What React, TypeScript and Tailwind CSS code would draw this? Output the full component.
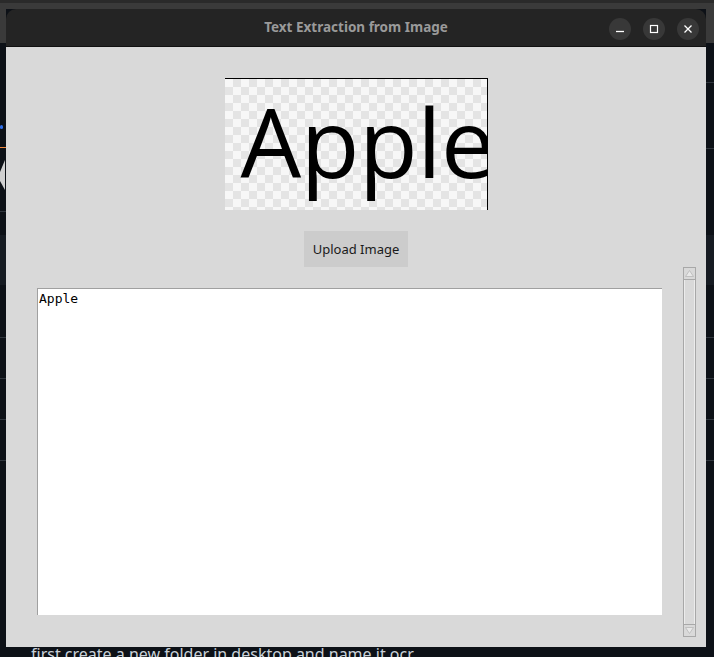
function Rule({ gap }: { gap: string }) {
  return <div className={`${gap} h-px w-full bg-[#30363d]`} />
}

function ScrollArrow({ down = false }: { down?: boolean }) {
  return (
    <div className={`flex h-[12px] items-center justify-center border-[#a8a8a8] ${down ? "border-t" : "border-b"}`}>
      <svg width="9" height="7" viewBox="0 0 9 7">
        <path d={down ? "M4.5 6.5L8.5 0.5H0.5Z" : "M4.5 0.5L8.5 6.5H0.5Z"} fill="#e8e8e8" stroke="#b8b8b8" strokeWidth="0.8" />
      </svg>
    </div>
  )
}

function WindowButton({ children }: { children: React.ReactNode }) {
  return (
    <button className="flex size-[22px] items-center justify-center rounded-full bg-[#383838]">
      {children}
    </button>
  )
}

export default function App() {
  return (
    <div className="flex h-[657px] w-[714px] flex-col overflow-hidden bg-[#0d1117] font-['Noto_Sans',sans-serif]">
      <div className="h-[3px] shrink-0 bg-[#2a2a2a]" />
      <div className="h-[6px] shrink-0 bg-[#3a3a3a]" />

      <div className="flex shrink-0">
        {/* desktop strip, left */}
        <div className="flex w-[6px] flex-col">
          <div className="h-[34px] bg-[#3a3a3a]" />
          <div className="mt-[82px] h-[4px] w-[3px] rounded-full bg-[#2f6feb]" />
          <div className="mt-[18px] h-px w-full bg-[#f0883e]" />
          <div className="mt-[12px] h-[30px] w-[5px] bg-[#d0d0d0] [clip-path:polygon(100%_0,100%_100%,0_70%,0_40%)]" />
          <Rule gap="mt-[21px]" />
          <div className="mt-[23px] h-[50px] w-full bg-[#161b22]" />
          <Rule gap="mt-[52px]" />
          <Rule gap="mt-[40px]" />
          <Rule gap="mt-[40px]" />
          <Rule gap="mt-[40px]" />
        </div>

        {/* app window */}
        <div className="w-[700px]">
          <div className="relative flex h-[38px] items-center justify-center rounded-t-[10px] border-b border-[#111] bg-[#242424]">
            <span className="text-[13.5px] font-bold text-[#9a9a9a]">Text Extraction from Image</span>
            <div className="absolute right-[7px] top-[9px] flex gap-[12px]">
              <WindowButton>
                <svg width="10" height="10" viewBox="0 0 10 10"><path d="M1 7.5h8" stroke="#fff" strokeWidth="1.3" /></svg>
              </WindowButton>
              <WindowButton>
                <svg width="10" height="10" viewBox="0 0 10 10"><rect x="1.5" y="1.5" width="7" height="7" fill="none" stroke="#fff" strokeWidth="1.2" /></svg>
              </WindowButton>
              <WindowButton>
                <svg width="10" height="10" viewBox="0 0 10 10"><path d="M1.5 1.5l7 7M8.5 1.5l-7 7" stroke="#fff" strokeWidth="1.3" /></svg>
              </WindowButton>
            </div>
          </div>

          <div className="flex h-[600px] flex-col items-center bg-[#d9d9d9] pt-[31px]">
            <div className="h-[132px] w-[263px] overflow-hidden border-r border-t border-black bg-[conic-gradient(#e4e4e4_25%,#f7f7f7_0_50%,#e4e4e4_0_75%,#f7f7f7_0)] bg-[length:16px_16px]">
              <div className="ml-[16px] mt-[2px] whitespace-nowrap font-['Open_Sans',sans-serif] text-[96px] leading-[120px] tracking-[-0.5px] text-black">
                Apple
              </div>
            </div>

            <button className="mt-[21px] h-[36px] w-[104px] bg-[#cccccc] pt-[2px] text-[13px] text-[#1a1a1a]">
              Upload Image
            </button>

            <div className="flex w-full items-start gap-[21px] pl-[31px]">
              <div className="mt-[21px] h-[327px] w-[625px] border-l border-t border-[#a0a0a0] bg-white">
                <div className="pl-[1px] pt-[2px] font-['DejaVu_Sans_Mono',monospace] text-[13px] leading-[16px] text-black">
                  Apple
                </div>
              </div>
              <div className="flex h-[370px] w-[13px] flex-col border border-[#a8a8a8] bg-[#d9d9d9]">
                <ScrollArrow />
                <div className="flex-1 border-x border-[#ececec]" />
                <ScrollArrow down />
              </div>
            </div>
          </div>
        </div>

        {/* desktop strip, right */}
        <div className="flex w-[8px] flex-col">
          <div className="h-[34px] bg-[#3a3a3a]" />
          <Rule gap="mt-[39px]" />
          <Rule gap="mt-[65px]" />
          <div className="mt-[86px] h-[50px] w-full bg-[#161b22]" />
          <Rule gap="mt-[52px]" />
          <Rule gap="mt-[40px]" />
          <Rule gap="mt-[40px]" />
          <Rule gap="mt-[40px]" />
        </div>
      </div>

      <p className="ml-[31px] mt-[-5px] whitespace-nowrap text-[16px] leading-[24px] text-[#c9d1d9]">
        first create a new folder in desktop and name it ocr
      </p>
    </div>
  )
}
